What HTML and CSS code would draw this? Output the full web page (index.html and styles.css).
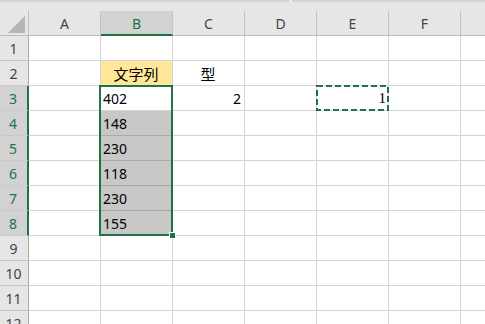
FILE: index.html
```html
<!DOCTYPE html>
<html lang="ja">
<head>
  <meta charset="UTF-8" />
  <title>Sheet1</title>
  <link rel="stylesheet" href="styles.css">
</head>
<body>
  <div class="sheet" id="sheet">
    <div class="topbar"></div>
  </div>

  <script>
    const COLS = ["A", "B", "C", "D", "E", "F", ""];
    const ROWS = 12;
    const SEL_COL = "B";
    const SEL_ROWS = [3, 8];

    // cell contents: text + extra classes
    const cells = {
      B2: { text: "文字列", cls: "fill-yellow center" },
      C2: { text: "型", cls: "center" },
      B3: { text: "402", cls: "active" },
      C3: { text: "2", cls: "right" },
      E3: { text: "1", cls: "right serif copy" },
      B4: { text: "148", cls: "picked" },
      B5: { text: "230", cls: "picked" },
      B6: { text: "118", cls: "picked" },
      B7: { text: "230", cls: "picked" },
      B8: { text: "155", cls: "picked" }
    };

    const sheet = document.getElementById("sheet");
    let html = `<div class="corner"><span class="corner-tri"></span></div>`;
    COLS.forEach(c => {
      html += `<div class="col-head${c === SEL_COL ? " sel" : ""}">${c}</div>`;
    });

    for (let r = 1; r <= ROWS; r++) {
      const inSel = r >= SEL_ROWS[0] && r <= SEL_ROWS[1];
      html += `<div class="row-head${inSel ? " sel" : ""}">${r}</div>`;
      COLS.forEach(c => {
        const cell = cells[c + r] || {};
        const cls = cell.cls || "";
        let inner = cell.text || "";
        if (cls.includes("copy")) {
          inner += `<svg class="ants" width="73" height="26"><rect x="1" y="1" width="71" height="24" /></svg>`;
        }
        // the active cell carries the frame around B3:B8
        if (cls.includes("active")) {
          inner += `<span class="selection"><span class="handle"></span></span>`;
        }
        html += `<div class="cell ${cls}">${inner}</div>`;
      });
    }

    sheet.insertAdjacentHTML("beforeend", html);
  </script>
</body>
</html>
```

FILE: styles.css
```css
* { box-sizing: border-box; }
body {
  margin: 0;
  background: #fff;
  font-family: "Noto Sans CJK JP", "Noto Sans", sans-serif;
  font-size: 14px;
  color: #000;
  overflow: hidden;
}
.sheet {
  display: grid;
  grid-template-columns: 29px repeat(7, 72px);
  grid-template-rows: 11px 25px repeat(12, 25px);
  width: 485px;
  height: 324px;
  overflow: hidden;
}
.topbar {
  grid-column: 1 / -1;
  background:
    linear-gradient(to right, #d3d3d3 289px, #ededed 289px 292px, #d3d3d3 292px) top / 100% 2px no-repeat,
    #e6e6e6;
}
.corner {
  position: relative;
  background: #e6e6e6;
  border-right: 1px solid #bdbdbd;
  border-bottom: 1px solid #bdbdbd;
}
.corner-tri {
  position: absolute;
  right: 3px;
  bottom: 2px;
  width: 0;
  height: 0;
  border-left: 17px solid transparent;
  border-bottom: 17px solid #b5b5b5;
}
.col-head,
.row-head {
  display: flex;
  align-items: center;
  justify-content: center;
  background: #e6e6e6;
  color: #444;
  font-family: "Noto Sans", sans-serif;
  font-size: 14px;
  border-right: 1px solid #c4c4c4;
  border-bottom: 1px solid #bdbdbd;
}
.col-head { padding-top: 1px; }
.col-head.sel {
  background: #d2d2d2;
  color: #217346;
  border-bottom: 2px solid #217346;
}
.row-head {
  border-right: 1px solid #a9a9a9;
  border-bottom: 1px solid #c9c9c9;
  padding-right: 1px;
}
.row-head.sel {
  background: #d2d2d2;
  color: #217346;
  border-right: 2px solid #217346;
}
.cell {
  position: relative;
  display: flex;
  align-items: center;
  padding: 0 3px 0 2px;
  border-right: 1px solid #d4d4d4;
  border-bottom: 1px solid #d4d4d4;
  font-family: "Noto Sans", "Noto Sans CJK JP", sans-serif;
  font-size: 14px;
  white-space: nowrap;
}
.cell.center {
  justify-content: center;
  font-family: "Noto Sans CJK JP", sans-serif;
  font-size: 15px;
}
.cell.right { justify-content: flex-end; }
.cell.serif { font-family: "Liberation Serif", serif; font-size: 15px; padding-right: 2px; }
.cell.fill-yellow { background: #ffe699; }
.cell.active { z-index: 2; }
.cell.picked {
  background: #c8c8c8;
  border-bottom-color: #aaa;
}
.ants {
  position: absolute;
  left: -1px;
  top: -1px;
}
.ants rect {
  fill: none;
  stroke: #217346;
  stroke-width: 2;
  stroke-dasharray: 6 3;
}
.selection {
  position: absolute;
  left: -2px;
  top: -1px;
  width: 74px;
  height: 151px;
  border: 2px solid #217346;
  pointer-events: none;
}
.handle {
  position: absolute;
  right: -5px;
  bottom: -5px;
  width: 7px;
  height: 7px;
  background: #217346;
  border: 1px solid #fff;
}
```
